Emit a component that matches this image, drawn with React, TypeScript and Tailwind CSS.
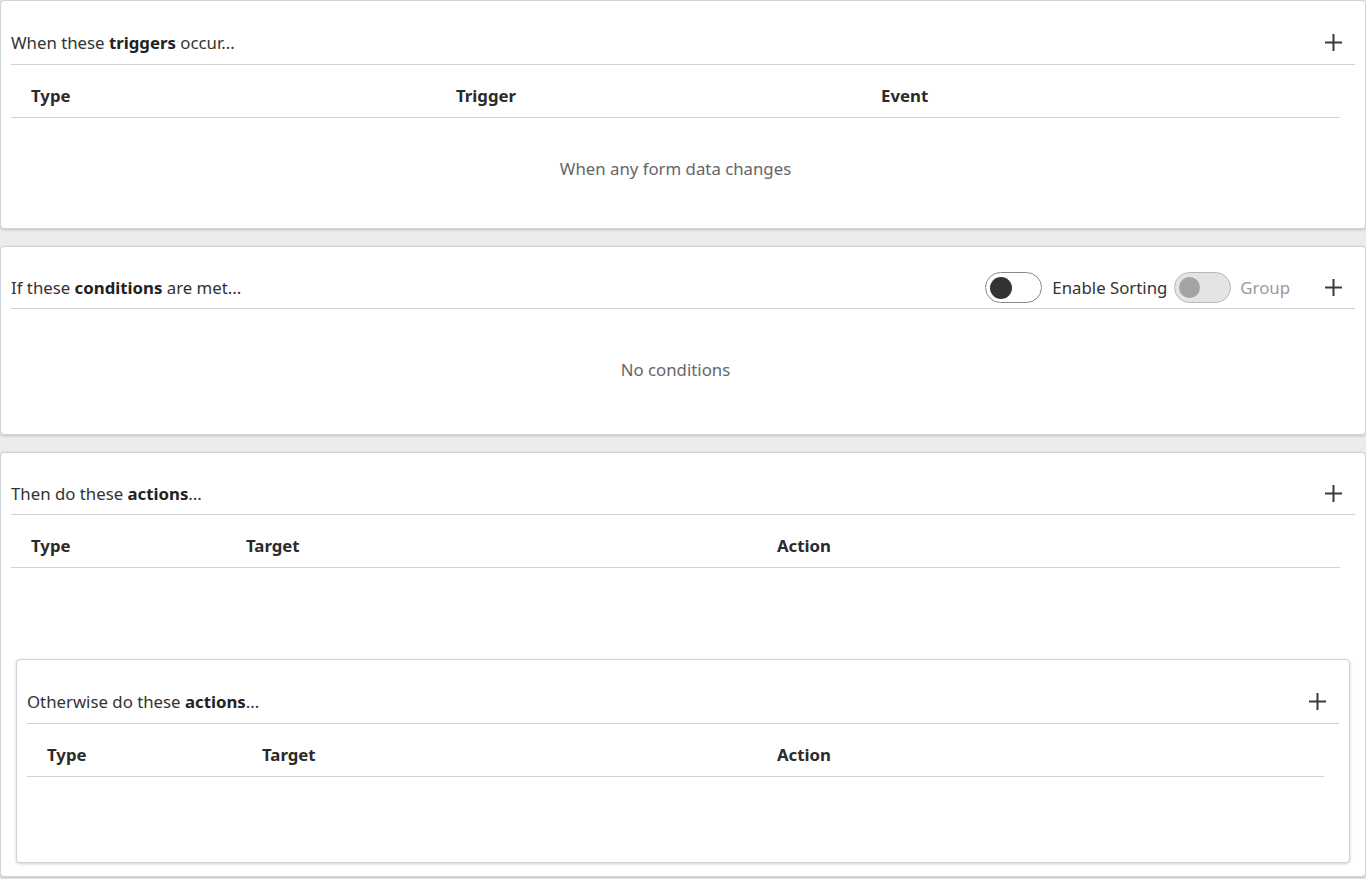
import React from 'react';

const font = { fontFamily: '"Noto Sans", "Open Sans", sans-serif' };

function PlusIcon() {
    return (
        <svg width="17" height="17" viewBox="0 0 17 17" className="block">
            <path d="M8.5 0v17M0 8.5h17" stroke="#3a3a3a" strokeWidth="2" />
        </svg>
    );
}

function Toggle({ disabled = false }: { disabled?: boolean }) {
    return (
        <div
            className={
                disabled
                    ? 'flex h-[31px] w-[57px] items-center rounded-full border border-[#b8b8b8] bg-[#e2e4e6] pl-[4px]'
                    : 'flex h-[31px] w-[57px] items-center rounded-full border border-[#8a8a8a] bg-white pl-[4px]'
            }
        >
            <div className={disabled ? 'h-[21px] w-[21px] rounded-full bg-[#a3a3a3]' : 'h-[22px] w-[22px] rounded-full bg-[#333333]'} />
        </div>
    );
}

function CardHeader({ children, right, h }: { children: React.ReactNode; right?: React.ReactNode; h: string }) {
    return (
        <div className={`flex items-center justify-between border-b border-[#cfd3d6] ${h}`}>
            <div className="text-[16.8px] leading-6 text-[#333]">{children}</div>
            <div className="mr-[13px] flex items-center">
                {right}
                <PlusIcon />
            </div>
        </div>
    );
}

function TableHead({ cols }: { cols: { label: string; w: string }[] }) {
    return (
        <div className="mr-[15px] flex h-[53px] items-end border-b border-[#cfd3d6] pb-[9px]">
            {cols.map(c => (
                <div key={c.label} className={`${c.w} pl-[20px] text-[16.8px] font-bold leading-6 text-[#2b2b2b]`}>
                    {c.label}
                </div>
            ))}
        </div>
    );
}

const cardCls = 'rounded-[4px] border border-[#cfd3d6] bg-white p-[10px] shadow-[0_1px_3px_rgba(0,0,0,0.18)]';

export default function App() {
    return (
        <div className="min-h-[879px] w-[1366px] bg-[#ececec]" style={font}>
            {/* triggers */}
            <div className={cardCls}>
                <CardHeader h="h-[54px] pt-[10px]">
                    When these <b className="text-[#222]">triggers</b> occur...
                </CardHeader>
                <TableHead
                    cols={[
                        { label: 'Type', w: 'w-[425px]' },
                        { label: 'Trigger', w: 'w-[425px]' },
                        { label: 'Event', w: 'flex-1' },
                    ]}
                />
                <div className="mr-[15px] h-[100px] pt-[39px] text-center text-[16.8px] leading-6 text-[#666]">When any form data changes</div>
            </div>

            {/* conditions */}
            <div className={`${cardCls} mt-[17px]`}>
                <CardHeader
                    h="h-[52px] pt-[10px]"
                    right={
                        <>
                            <Toggle />
                            <span className="ml-[10px] text-[16.8px] leading-6 text-[#333]">Enable Sorting</span>
                            <div className="ml-[7px]">
                                <Toggle disabled />
                            </div>
                            <span className="ml-[9px] text-[16.8px] leading-6 text-[#9a9a9a]">Group</span>
                            <span className="w-[35px]" />
                        </>
                    }
                >
                    If these <b className="text-[#222]">conditions</b> are met...
                </CardHeader>
                <div className="mr-[15px] h-[115px] pt-[49px] text-center text-[16.8px] leading-6 text-[#666]">No conditions</div>
            </div>

            {/* actions */}
            <div className={`${cardCls} mt-[17px]`}>
                <CardHeader h="h-[52px] pt-[10px]">
                    Then do these <b className="text-[#222]">actions</b>...
                </CardHeader>
                <TableHead
                    cols={[
                        { label: 'Type', w: 'w-[215px]' },
                        { label: 'Target', w: 'w-[531px]' },
                        { label: 'Action', w: 'flex-1' },
                    ]}
                />
                <div className="h-[91px]" />

                <div className="mx-[5px] mb-[3px] rounded-[4px] border border-[#cfd3d6] bg-white p-[10px] shadow-[0_1px_3px_rgba(0,0,0,0.18)]">
                    <CardHeader h="h-[54px] pt-[10px]">
                        Otherwise do these <b className="text-[#222]">actions</b>...
                    </CardHeader>
                    <TableHead
                        cols={[
                            { label: 'Type', w: 'w-[215px]' },
                            { label: 'Target', w: 'w-[515px]' },
                            { label: 'Action', w: 'flex-1' },
                        ]}
                    />
                    <div className="h-[75px]" />
                </div>
            </div>
        </div>
    );
}
